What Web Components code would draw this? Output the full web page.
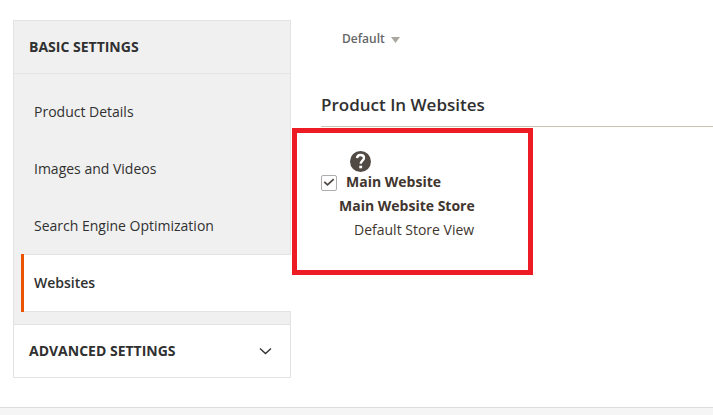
<!DOCTYPE html>
<html lang="en">
<head>
<meta charset="utf-8">
<meta name="viewport" content="width=device-width, initial-scale=1">
<title>Product In Websites</title>
<style>
	body {
		margin: 0;
		background: #fff;
		color: #303030;
		font-family: "Open Sans", "Noto Sans", sans-serif;
		font-size: 14px;
		line-height: 24px;
	}
</style>
</head>
<body>
<product-page>
	<settings-panel slot="nav">
		<settings-group heading="Basic Settings" open>
			<settings-item>Product Details</settings-item>
			<settings-item>Images and Videos</settings-item>
			<settings-item>Search Engine Optimization</settings-item>
			<settings-item active>Websites</settings-item>
		</settings-group>
		<settings-group heading="Advanced Settings"></settings-group>
	</settings-panel>
	<store-switcher>Default</store-switcher>
	<form-section heading="Product In Websites">
		<highlight-box>
			<help-icon></help-icon>
			<website-option checked>Main Website</website-option>
			<store-line>Main Website Store</store-line>
			<store-line view>Default Store View</store-line>
		</highlight-box>
	</form-section>
</product-page>
<script>
"use strict";
class ProductPage extends HTMLElement {
	constructor() {
		super();
		this.attachShadow({ mode: "open" });
		this.shadowRoot.innerHTML = `
			<style>
				:host {
					display: flex;
					flex-direction: column;
					min-height: 100vh;
				}
				.columns {
					display: grid;
					grid-template-columns: 278px minmax(0, 1fr);
					column-gap: 30px;
					align-items: start;
					padding: 20px 0 29px 13px;
				}
				footer {
					flex: 1;
					border-top: 1px solid #ddd;
					background: #f5f5f5;
				}
			</style>
			<div class="columns">
				<slot name="nav"></slot>
				<main><slot></slot></main>
			</div>
			<footer></footer>
		`;
	}
}
customElements.define("product-page", ProductPage);

class SettingsPanel extends HTMLElement {
	constructor() {
		super();
		this.attachShadow({ mode: "open" });
		this.shadowRoot.innerHTML = `
			<style>
				:host {
					display: block;
					border: 1px solid #e3e3e3;
					border-top: 0;
				}
			</style>
			<nav aria-label="Product settings"><slot></slot></nav>
		`;
	}
}
customElements.define("settings-panel", SettingsPanel);

class SettingsGroup extends HTMLElement {
	constructor() {
		super();
		this.attachShadow({ mode: "open" });
		this.shadowRoot.innerHTML = `
			<style>
				:host {
					display: block;
					border-top: 1px solid #e3e3e3;
				}
				:host([open]) {
					background: #f0f0f0;
				}
				button {
					display: flex;
					align-items: center;
					justify-content: space-between;
					box-sizing: border-box;
					width: 100%;
					padding: 14px 18px 14px 15px;
					border: 0;
					background: none;
					color: inherit;
					font: inherit;
					font-weight: 700;
					text-align: left;
					text-transform: uppercase;
					cursor: pointer;
				}
				svg {
					width: 14px;
					height: 14px;
					fill: none;
					stroke: #303030;
					stroke-width: 1.3;
				}
				.items {
					display: none;
				}
				:host([open]) .items {
					display: block;
					padding: 10px 0 12px 7px;
					border-top: 1px solid #e3e3e3;
				}
				:host([open]) svg {
					display: none;
				}
			</style>
			<button type="button">
				<span></span>
				<svg viewBox="0 0 14 14" aria-hidden="true"><path d="M2 4.500 7.500 9.500l5.500-5"/></svg>
			</button>
			<div class="items"><slot></slot></div>
		`;
	}
	connectedCallback() {
		this._button = this.shadowRoot.querySelector("button");
		this.shadowRoot.querySelector("span").textContent = this.getAttribute("heading");
		this._button.addEventListener("click", () => {
			this.toggleAttribute("open");
			this._render();
		});
		this._render();
	}
	_render() {
		this._button.setAttribute("aria-expanded", this.hasAttribute("open"));
	}
}
customElements.define("settings-group", SettingsGroup);

class SettingsItem extends HTMLElement {
	constructor() {
		super();
		this.attachShadow({ mode: "open" });
		this.shadowRoot.innerHTML = `
			<style>
				:host {
					display: block;
					margin-top: -1px;
				}
				a {
					display: block;
					padding: 16px 10px;
					border: 1px solid transparent;
					border-left-width: 3px;
					border-right: 0;
					color: #303030;
					text-decoration: none;
				}
				:host([active]) {
					margin-right: -1px;
				}
				:host([active]) a {
					position: relative;
					border-color: #e3e3e3;
					border-left: 0;
					padding-left: 13px;
					background: #fff;
					font-weight: 600;
				}
				/* marker runs over the row's top and bottom borders */
				:host([active]) a::before {
					content: "";
					position: absolute;
					top: -1px;
					bottom: -1px;
					left: 0;
					width: 3px;
					background: #eb5202;
				}
			</style>
			<a href="#"><slot></slot></a>
		`;
	}
}
customElements.define("settings-item", SettingsItem);

class StoreSwitcher extends HTMLElement {
	constructor() {
		super();
		this.attachShadow({ mode: "open" });
		this.shadowRoot.innerHTML = `
			<style>
				:host {
					display: block;
					padding: 7px 21px;
				}
				button {
					display: flex;
					align-items: center;
					gap: 6px;
					padding: 0;
					border: 0;
					background: none;
					color: #666;
					font: inherit;
					font-size: 12px;
					font-weight: 600;
					cursor: pointer;
				}
				svg {
					width: 9px;
					height: 6px;
					margin-top: 2px;
					fill: #aaa6a0;
				}
			</style>
			<button type="button" aria-haspopup="true">
				<slot></slot>
				<svg viewBox="0 0 9 6" aria-hidden="true"><path d="M0 0h9L4.500 6z"/></svg>
			</button>
		`;
	}
}
customElements.define("store-switcher", StoreSwitcher);

class FormSection extends HTMLElement {
	constructor() {
		super();
		this.attachShadow({ mode: "open" });
		this.shadowRoot.innerHTML = `
			<style>
				:host {
					display: block;
					margin-top: 35px;
				}
				h2 {
					margin: 0 0 1px;
					padding-bottom: 9px;
					border-bottom: 1px solid #cac3b4;
					font-size: 17px;
					font-weight: 600;
					line-height: 24px;
				}
			</style>
			<section>
				<h2></h2>
				<slot></slot>
			</section>
		`;
	}
	connectedCallback() {
		this.shadowRoot.querySelector("h2").textContent = this.getAttribute("heading");
	}
}
customElements.define("form-section", FormSection);

class HighlightBox extends HTMLElement {
	constructor() {
		super();
		this.attachShadow({ mode: "open" });
		this.shadowRoot.innerHTML = `
			<style>
				:host {
					display: block;
					box-sizing: border-box;
					max-width: 241px;
					margin-left: -29px;
					padding: 18px 24px 28px;
					border: 5px solid #ed1c24;
				}
			</style>
			<slot></slot>
		`;
	}
}
customElements.define("highlight-box", HighlightBox);

class HelpIcon extends HTMLElement {
	constructor() {
		super();
		this.attachShadow({ mode: "open" });
		this.shadowRoot.innerHTML = `
			<style>
				:host {
					display: block;
					padding-left: 29px;
				}
				svg {
					display: block;
					width: 21px;
					height: 21px;
				}
			</style>
			<svg viewBox="0 0 21 21" role="img" aria-label="Help">
				<circle cx="10.5" cy="10.5" r="10.5" fill="#514943"/>
				<path d="M7 7.200C7.200 5 8.500 4 10.500 4c2.100 0 3.500 1.200 3.500 3 0 2.700-3.300 2.700-3.300 5.800" fill="none" stroke="#fff" stroke-width="2.400"/>
				<rect x="9.300" y="14.700" width="2.800" height="2.600" fill="#fff"/>
			</svg>
		`;
	}
}
customElements.define("help-icon", HelpIcon);

class WebsiteOption extends HTMLElement {
	constructor() {
		super();
		this.attachShadow({ mode: "open" });
		this.shadowRoot.innerHTML = `
			<style>
				:host {
					display: block;
					margin-top: -2px;
				}
				label {
					display: flex;
					align-items: center;
					gap: 9px;
					color: #41362f;
					font-weight: 700;
				}
				.box {
					display: grid;
					margin-top: 2px;
				}
				input, svg {
					grid-area: 1 / 1;
					box-sizing: border-box;
					width: 16px;
					height: 16px;
					margin: 0;
				}
				input {
					appearance: none;
					border: 1px solid #adadad;
					border-radius: 2px;
					background: #fff;
				}
				svg {
					visibility: hidden;
					pointer-events: none;
					fill: none;
					stroke: #514943;
					stroke-width: 1.8;
				}
				input:checked + svg {
					visibility: visible;
				}
			</style>
			<label>
				<span class="box">
					<input type="checkbox">
					<svg viewBox="0 0 16 16" aria-hidden="true"><path d="M3.300 6.800 6.500 9.800l6.200-5.600"/></svg>
				</span>
				<slot></slot>
			</label>
		`;
	}
	connectedCallback() {
		this.shadowRoot.querySelector("input").checked = this.hasAttribute("checked");
	}
}
customElements.define("website-option", WebsiteOption);

class StoreLine extends HTMLElement {
	constructor() {
		super();
		this.attachShadow({ mode: "open" });
		this.shadowRoot.innerHTML = `
			<style>
				:host {
					display: block;
					padding-left: 18px;
					color: #41362f;
					font-weight: 700;
				}
				:host([view]) {
					padding-left: 33px;
					font-weight: 400;
				}
			</style>
			<slot></slot>
		`;
	}
}
customElements.define("store-line", StoreLine);
</script>
</body>
</html>
